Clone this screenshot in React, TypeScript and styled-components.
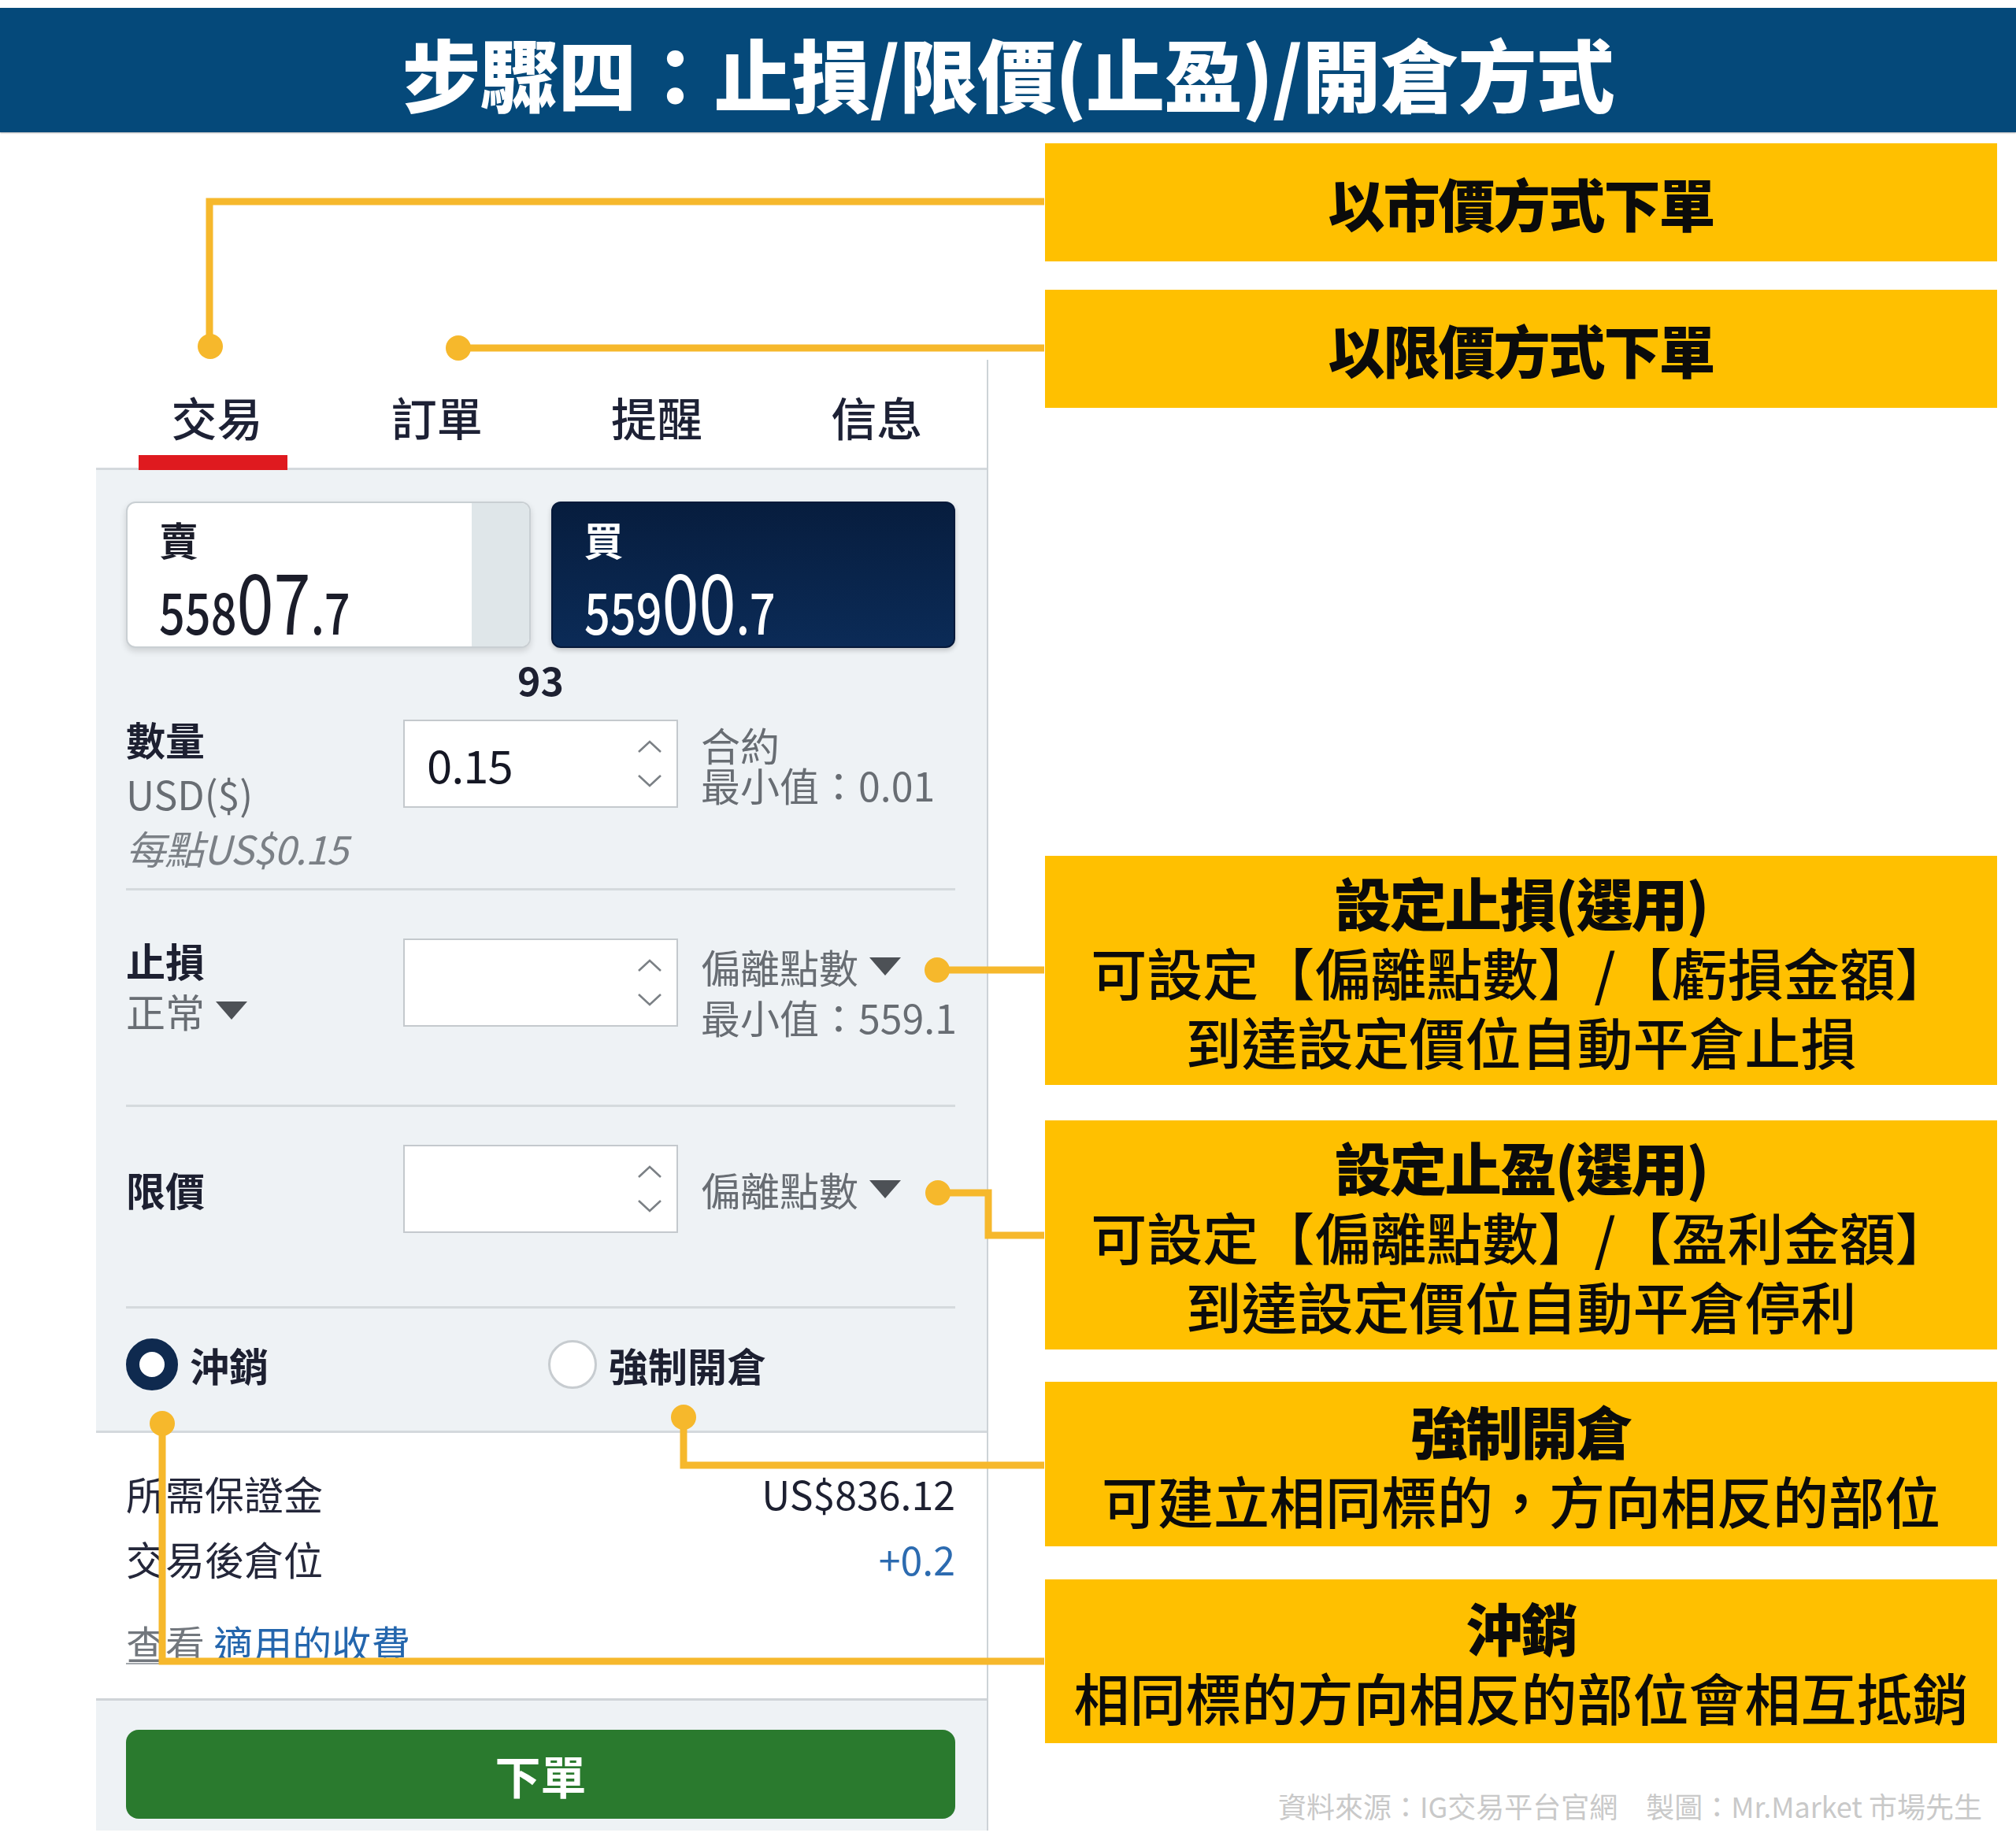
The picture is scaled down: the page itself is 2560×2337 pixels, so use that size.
import styled, { createGlobalStyle } from 'styled-components';

const FONT = '"Noto Sans CJK TC", "Noto Sans", sans-serif';
const GOLD = '#f6b82c';

const GlobalStyle = createGlobalStyle`
  html, body {
    margin: 0;
    padding: 0;
    background: #ffffff;
    font-family: ${FONT};
  }
`;

type Row = { label: string; value: string; blue?: boolean };

const summary: Row[] = [
  { label: '所需保證金', value: 'US$836.12' },
  { label: '交易後倉位', value: '+0.2', blue: true },
];

// callout lines: [points], dot at first point
const connectors: { pts: [number, number][]; dot: [number, number] }[] = [
  { pts: [[1326, 256], [266, 256], [266, 440]], dot: [267, 440] },
  { pts: [[1326, 442], [582, 442]], dot: [582, 442] },
  { pts: [[1326, 1232], [1190, 1232]], dot: [1190, 1232] },
  { pts: [[1190, 1515], [1255, 1515], [1255, 1569], [1326, 1569]], dot: [1191, 1515] },
  { pts: [[868, 1800], [868, 1861], [1326, 1861]], dot: [868, 1800] },
  { pts: [[206, 1808], [206, 2110], [1326, 2110]], dot: [206, 1808] },
];

function Chevrons() {
  return (
    <Arrows>
      <svg width='36' height='20' viewBox='0 0 36 20'>
        <polyline points='4,17 18,4 32,17' fill='none' stroke='#7b8085' strokeWidth='2.6' />
      </svg>
      <svg width='36' height='20' viewBox='0 0 36 20'>
        <polyline points='4,3 18,16 32,3' fill='none' stroke='#7b8085' strokeWidth='2.6' />
      </svg>
    </Arrows>
  );
}

function Stepper({ value }: { value?: string }) {
  return (
    <StepBox>
      <StepValue>{value}</StepValue>
      <Chevrons />
    </StepBox>
  );
}

function Price({ head, big, tail }: { head: string; big: string; tail: string }) {
  return (
    <PriceText>
      <PriceSmall>{head}</PriceSmall>
      <PriceBig>{big}</PriceBig>
      <PriceSmall>{tail}</PriceSmall>
    </PriceText>
  );
}

export default function App() {
  return (
    <Canvas>
      <GlobalStyle />
      <Header>
        <Title>步驟四：止損/限價(止盈)/開倉方式</Title>
      </Header>

      <Main>
        <Panel>
          <TabBar>
            <Tab $active>交易</Tab>
            <Tab>訂單</Tab>
            <Tab>提醒</Tab>
            <Tab>信息</Tab>
          </TabBar>

          <TradeBody>
            <Quotes>
              <QuoteCard $side='sell'>
                <QuoteInner>
                  <QuoteLabel>賣</QuoteLabel>
                  <Price head='558' big='07' tail='.7' />
                </QuoteInner>
                <SpreadStrip />
              </QuoteCard>
              <QuoteCard $side='buy'>
                <QuoteInner>
                  <QuoteLabel>買</QuoteLabel>
                  <Price head='559' big='00' tail='.7' />
                </QuoteInner>
              </QuoteCard>
            </Quotes>
            <Spread>93</Spread>

            <Field $pt={12} $pb={17}>
              <Stack $lh={69}>
                <Label>數量</Label>
                <Sub>USD($)</Sub>
                <Sub $italic>每點US$0.15</Sub>
              </Stack>
              <InputCell $mt={10}>
                <Stepper value='0.15' />
              </InputCell>
              <Side $mt={16} $lh={51}>
                <SideText>合約</SideText>
                <SideText>最小值：0.01</SideText>
              </Side>
            </Field>

            <Field $pt={56} $pb={80}>
              <Stack $lh={64}>
                <Label>止損</Label>
                <Sub>
                  <Drop>
                    正常<Caret />
                  </Drop>
                </Sub>
              </Stack>
              <InputCell $mt={5}>
                <Stepper />
              </InputCell>
              <Side $mt={8} $lh={64}>
                <SideText>
                  <Drop>
                    偏離點數<Caret />
                  </Drop>
                </SideText>
                <SideText>最小值：559.1</SideText>
              </Side>
            </Field>

            <Field $pt={48} $pb={93} $center>
              <Stack $lh={64}>
                <Label>限價</Label>
              </Stack>
              <InputCell>
                <Stepper />
              </InputCell>
              <Side $lh={64}>
                <SideText>
                  <Drop>
                    偏離點數<Caret />
                  </Drop>
                </SideText>
              </Side>
            </Field>

            <RadioRow>
              <RadioItem>
                <Radio $checked />
                <RadioText>沖銷</RadioText>
              </RadioItem>
              <RadioItem>
                <Radio />
                <RadioText>強制開倉</RadioText>
              </RadioItem>
            </RadioRow>
          </TradeBody>

          <Summary>
            {summary.map((r) => (
              <SummaryRow key={r.label}>
                <span>{r.label}</span>
                <SummaryValue $blue={r.blue}>{r.value}</SummaryValue>
              </SummaryRow>
            ))}
            <FeeLink>
              查看 <a>適用的收費</a>
            </FeeLink>
          </Summary>

          <Footer>
            <SubmitButton>下單</SubmitButton>
          </Footer>
        </Panel>

        <Notes>
          <Callout $mt={14} $h={150}>
            <CalloutTitle>以市價方式下單</CalloutTitle>
          </Callout>
          <Callout $mt={36} $h={150}>
            <CalloutTitle>以限價方式下單</CalloutTitle>
          </Callout>
          <Callout $mt={569} $h={291}>
            <CalloutTitle>設定止損(選用)</CalloutTitle>
            <CalloutLine>可設定【偏離點數】/【虧損金額】</CalloutLine>
            <CalloutLine>到達設定價位自動平倉止損</CalloutLine>
          </Callout>
          <Callout $mt={45} $h={291}>
            <CalloutTitle>設定止盈(選用)</CalloutTitle>
            <CalloutLine>可設定【偏離點數】/【盈利金額】</CalloutLine>
            <CalloutLine>到達設定價位自動平倉停利</CalloutLine>
          </Callout>
          <Callout $mt={41} $h={209}>
            <CalloutTitle>強制開倉</CalloutTitle>
            <CalloutLine>可建立相同標的，方向相反的部位</CalloutLine>
          </Callout>
          <Callout $mt={42} $h={208}>
            <CalloutTitle>沖銷</CalloutTitle>
            <CalloutLine>相同標的方向相反的部位會相互抵銷</CalloutLine>
          </Callout>
          <Credit>資料來源：IG交易平台官網　製圖：Mr.Market 市場先生</Credit>
        </Notes>
      </Main>

      <Leaders width='2560' height='2337' viewBox='0 0 2560 2337'>
        {connectors.map((c, i) => (
          <g key={i}>
            <polyline
              points={c.pts.map((p) => p.join(',')).join(' ')}
              fill='none'
              stroke={GOLD}
              strokeWidth='9'
              strokeLinejoin='miter'
            />
            <circle cx={c.dot[0]} cy={c.dot[1]} r='16' fill={GOLD} />
          </g>
        ))}
      </Leaders>
    </Canvas>
  );
}

const Canvas = styled.div`
  position: relative;
  width: 2560px;
  height: 2337px;
  overflow: hidden;
  background: #ffffff;
`;

const Header = styled.header`
  margin-top: 10px;
  height: 158px;
  background: #05497a;
  display: flex;
  align-items: center;
  justify-content: center;
  box-shadow: 0 1px 2px rgba(0, 0, 0, 0.3);
`;

const Title = styled.h1`
  margin: 0;
  color: #ffffff;
  font-size: 100px;
  font-weight: 900;
  letter-spacing: -1px;
  line-height: 1;
  padding-top: 6px;
`;

const Main = styled.div`
  display: flex;
  padding-left: 122px;
`;

const Panel = styled.section`
  width: 1131px;
  height: 1868px;
  margin-top: 289px;
  border-right: 2px solid #cdd3d7;
  display: flex;
  flex-direction: column;
  color: #1d2031;
`;

const TabBar = styled.nav`
  display: grid;
  grid-template-columns: repeat(4, 1fr);
  height: 137px;
  padding-left: 14px;
  border-bottom: 3px solid #d4d9dd;
  background: #ffffff;
`;

const Tab = styled.div<{ $active?: boolean }>`
  position: relative;
  display: flex;
  align-items: center;
  justify-content: center;
  padding-top: 6px;
  font-size: 58px;
  font-weight: 500;
  color: #1d2135;
  &::after {
    content: '';
    display: ${(p) => (p.$active ? 'block' : 'none')};
    position: absolute;
    bottom: -3px;
    left: 50%;
    width: 189px;
    height: 19px;
    margin-left: -100px;
    background: #df1a1f;
  }
`;

const TradeBody = styled.div`
  background: #eef2f5;
  padding: 40px 40px 0 38px;
`;

const Quotes = styled.div`
  display: grid;
  grid-template-columns: 1fr 1fr;
  column-gap: 26px;
  height: 186px;
`;

const QuoteCard = styled.div<{ $side: 'sell' | 'buy' }>`
  display: flex;
  border-radius: 12px;
  box-sizing: border-box;
  ${(p) =>
    p.$side === 'sell'
      ? `
    background: #ffffff;
    border: 2px solid #c9cfd3;
    box-shadow: 0 4px 8px rgba(0, 0, 0, 0.14);
    color: #1b1d2a;
  `
      : `
    background: linear-gradient(180deg, #071d3e 0%, #0b2b57 100%);
    border: 2px solid #06193a;
    box-shadow: 0 3px 6px rgba(0, 0, 0, 0.2);
    color: #ffffff;
  `}
`;

const QuoteInner = styled.div`
  flex: 1;
  display: flex;
  flex-direction: column;
  padding: 20px 0 0 40px;
`;

const SpreadStrip = styled.div`
  width: 73px;
  border-radius: 0 10px 10px 0;
  background: #dfe6e9;
`;

const QuoteLabel = styled.div`
  font-size: 50px;
  font-weight: 700;
  line-height: 50px;
`;

const PriceText = styled.div`
  display: flex;
  align-items: baseline;
  height: 104px;
  line-height: 1;
  margin-top: -2px;
  transform: scaleX(0.8);
  transform-origin: left center;
`;

const PriceSmall = styled.span`
  font-size: 72px;
  font-weight: 500;
`;

const PriceBig = styled.span`
  font-size: 106px;
  font-weight: 400;
`;

const Spread = styled.div`
  margin-top: 9px;
  text-align: center;
  font-size: 50px;
  font-weight: 700;
  line-height: 60px;
  color: #1d2031;
`;

const Field = styled.div<{ $pt: number; $pb: number; $center?: boolean }>`
  display: grid;
  grid-template-columns: 352px 349px 1fr;
  align-items: ${(p) => (p.$center ? 'center' : 'start')};
  padding: ${(p) => p.$pt}px 0 ${(p) => p.$pb}px;
  border-bottom: 3px solid #d5dadd;
`;

const Stack = styled.div<{ $lh: number }>`
  display: flex;
  flex-direction: column;
  line-height: ${(p) => p.$lh}px;
`;

const Label = styled.div`
  font-size: 50px;
  font-weight: 700;
  color: #1d2031;
`;

const Sub = styled.div<{ $italic?: boolean }>`
  font-size: 50px;
  color: #686d73;
  font-style: ${(p) => (p.$italic ? 'italic' : 'normal')};
  ${(p) => (p.$italic ? 'color: #7b8086; letter-spacing: -1px;' : '')}
`;

const InputCell = styled.div<{ $mt?: number }>`
  margin-top: ${(p) => p.$mt ?? 0}px;
`;

const StepBox = styled.div`
  box-sizing: border-box;
  width: 349px;
  height: 112px;
  background: #ffffff;
  border: 2px solid #c4c9cd;
  display: flex;
  align-items: center;
  padding: 0 16px 0 28px;
`;

const StepValue = styled.span`
  font-size: 58px;
  color: #151724;
  letter-spacing: -1px;
`;

const Arrows = styled.div`
  margin-left: auto;
  display: flex;
  flex-direction: column;
  gap: 24px;
`;

const Side = styled.div<{ $mt?: number; $lh: number }>`
  display: flex;
  flex-direction: column;
  padding-left: 29px;
  margin-top: ${(p) => p.$mt ?? 0}px;
  line-height: ${(p) => p.$lh}px;
`;

const SideText = styled.div`
  font-size: 50px;
  color: #686d73;
  white-space: nowrap;
`;

const Drop = styled.span`
  display: inline-flex;
  align-items: center;
  gap: 14px;
`;

const Caret = styled.i`
  display: inline-block;
  width: 0;
  height: 0;
  border-left: 20px solid transparent;
  border-right: 20px solid transparent;
  border-top: 23px solid #4d5156;
`;

const RadioRow = styled.div`
  display: grid;
  grid-template-columns: 536px 1fr;
  align-items: center;
  height: 66px;
  padding: 38px 0 51px;
`;

const RadioItem = styled.label`
  display: flex;
  align-items: center;
  gap: 15px;
  height: 66px;
  line-height: 66px;
`;

const Radio = styled.span<{ $checked?: boolean }>`
  box-sizing: border-box;
  display: inline-block;
  border-radius: 50%;
  background: #ffffff;
  ${(p) =>
    p.$checked
      ? 'width: 66px; height: 66px; border: 17px solid #0f2a4f;'
      : 'width: 62px; height: 62px; border: 3px solid #c7ccd0;'}
`;

const RadioText = styled.span`
  font-size: 50px;
  font-weight: 700;
  color: #1d2031;
`;

const Summary = styled.div`
  border-top: 3px solid #d4d9dd;
  background: #ffffff;
  padding: 35px 40px 24px 38px;
  flex: 1;
`;

const SummaryRow = styled.div`
  display: flex;
  justify-content: space-between;
  font-size: 50px;
  line-height: 83px;
  color: #24273a;
`;

const SummaryValue = styled.span<{ $blue?: boolean }>`
  color: ${(p) => (p.$blue ? '#2c6bb0' : '#1d2031')};
`;

const FeeLink = styled.div`
  margin-top: 24px;
  font-size: 50px;
  line-height: 83px;
  color: #72777d;
  text-decoration: underline;
  text-decoration-thickness: 2px;
  text-underline-offset: 4px;
  text-decoration-color: #a3a8ad;
  & a {
    color: #2466ad;
  }
`;

const Footer = styled.div`
  border-top: 3px solid #cfd4d8;
  background: #eef2f5;
  padding: 37px 40px 15px 38px;
`;

const SubmitButton = styled.button`
  width: 100%;
  height: 113px;
  border: none;
  border-radius: 16px;
  background: #2a7a2e;
  color: #ffffff;
  font-family: ${FONT};
  font-size: 58px;
  font-weight: 700;
`;

const Notes = styled.aside`
  width: 1209px;
  margin-left: 72px;
  display: flex;
  flex-direction: column;
`;

const Callout = styled.div<{ $mt: number; $h: number }>`
  margin-top: ${(p) => p.$mt}px;
  height: ${(p) => p.$h}px;
  background: #ffc000;
  display: flex;
  flex-direction: column;
  align-items: center;
  justify-content: center;
  color: #0b0b0b;
`;

const CalloutTitle = styled.div`
  font-size: 72px;
  font-weight: 900;
  line-height: 88px;
  letter-spacing: -2px;
`;

const CalloutLine = styled.div`
  font-size: 71px;
  font-weight: 500;
  line-height: 88px;
  white-space: nowrap;
`;

const Credit = styled.div`
  margin-top: 57px;
  padding-right: 19px;
  text-align: right;
  font-size: 36px;
  line-height: 44px;
  color: #c9c9c9;
`;

const Leaders = styled.svg`
  position: absolute;
  top: 0;
  left: 0;
  pointer-events: none;
`;
